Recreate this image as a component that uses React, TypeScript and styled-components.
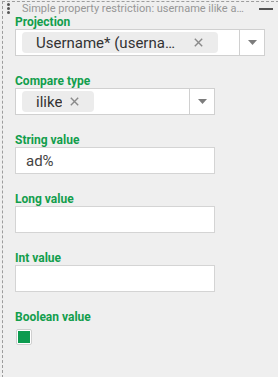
import React from 'react'
import styled, { createGlobalStyle } from 'styled-components'

const GREEN = '#129e4c'

const GlobalStyle = createGlobalStyle`
  html, body {
    margin: 0;
    padding: 0;
    background: #efefef;
  }
  body {
    font-family: Roboto, "Liberation Sans", sans-serif;
    overflow: hidden;
  }
`

// right and bottom borders sit just past the frame, as in the original
const Panel = styled.div`
  margin: 1px 0 0 2px;
  width: calc(100vw - 1px);
  height: 100vh;
  box-sizing: border-box;
  border: 1px dashed #9c9c9c;
  background: #efefef;
`

const Header = styled.div`
  display: flex;
  align-items: center;
  height: 13px;
  width: 271px;
  padding-left: 4px;
  box-sizing: border-box;
`

const Title = styled.div`
  flex: 1;
  min-width: 0;
  margin-left: 12px;
  font-size: 11px;
  line-height: 13px;
  color: #979797;
  white-space: nowrap;
  overflow: hidden;
  text-overflow: ellipsis;
`

const Minimize = styled.button`
  width: 14px;
  height: 2px;
  margin: 0 1px 0 11px;
  padding: 0;
  border: none;
  background: #555;
  cursor: pointer;
`

const Body = styled.div`
  padding: 0 12px;
`

const Field = styled.div`
  margin-bottom: 18px;
`

const Label = styled.label`
  display: block;
  font-size: 12px;
  line-height: 14px;
  font-weight: 700;
  color: ${GREEN};
`

const Select = styled.div<{ $width: number }>`
  display: flex;
  width: ${p => p.$width}px;
  height: 27px;
  box-sizing: border-box;
  border: 1px solid #d0d0d0;
  background: #fff;
`

const ChipArea = styled.div`
  flex: 1;
  min-width: 0;
  display: flex;
  align-items: center;
  padding: 0 6px;
`

const Chip = styled.span`
  display: inline-flex;
  align-items: center;
  height: 21px;
  padding: 0 15px 0 14px;
  border-radius: 4px;
  background: #ececec;
  font-size: 15px;
  color: #333;
`

const ChipText = styled.span<{ $max?: number }>`
  max-width: ${p => (p.$max ? `${p.$max}px` : 'none')};
  white-space: nowrap;
  overflow: hidden;
  text-overflow: ellipsis;
`

const Remove = styled.svg`
  margin-left: 8px;
  flex-shrink: 0;
`

const ArrowCell = styled.div`
  width: 25px;
  box-sizing: border-box;
  border-left: 1px solid #d0d0d0;
  display: flex;
  align-items: center;
  justify-content: center;
`

const Input = styled.input`
  display: block;
  width: 200px;
  height: 27px;
  box-sizing: border-box;
  border: 1px solid #d4d4d4;
  background: #fff;
  padding: 0 10px;
  font-family: inherit;
  font-size: 15px;
  color: #444;
  outline: none;
`

const Checkbox = styled.div`
  width: 16px;
  height: 16px;
  margin: 5px 0 0 1px;
  box-sizing: border-box;
  border: 1px solid #cfcfcf;
  border-radius: 2px;
  padding: 1px;
  background: #fff;
`

const CheckFill = styled.div`
  width: 100%;
  height: 100%;
  background: #0c9b4f;
`

function Handle() {
  return (
    <svg width="3" height="11" viewBox="0 0 3 11">
      <circle cx="1.5" cy="1.5" r="1.5" fill="#555" />
      <circle cx="1.5" cy="5.5" r="1.5" fill="#555" />
      <circle cx="1.5" cy="9.5" r="1.5" fill="#555" />
    </svg>
  )
}

function Cross() {
  return (
    <Remove width="9" height="9" viewBox="0 0 9 9">
      <path d="M0.8 0.8 L8.2 8.2 M8.2 0.8 L0.8 8.2" stroke="#8a8a8a" strokeWidth="1.4" />
    </Remove>
  )
}

function Arrow() {
  return (
    <svg width="9" height="5" viewBox="0 0 9 5">
      <path d="M0 0 H9 L4.5 5 Z" fill="#7c7c7c" />
    </svg>
  )
}

function TagSelect({ value, width, max }: { value: string; width: number; max?: number }) {
  return (
    <Select $width={width}>
      <ChipArea>
        <Chip>
          <ChipText $max={max}>{value}</ChipText>
          <Cross />
        </Chip>
      </ChipArea>
      <ArrowCell>
        <Arrow />
      </ArrowCell>
    </Select>
  )
}

export default function App() {
  return (
    <>
      <GlobalStyle />
      <Panel>
        <Header>
          <Handle />
          <Title>Simple property restriction: username ilike ad%</Title>
          <Minimize aria-label="minimize" />
        </Header>
        <Body>
          <Field>
            <Label>Projection</Label>
            <TagSelect value="Username* (username)" width={250} max={150} />
          </Field>
          <Field>
            <Label>Compare type</Label>
            <TagSelect value="ilike" width={200} />
          </Field>
          <Field>
            <Label>String value</Label>
            <Input defaultValue="ad%" />
          </Field>
          <Field>
            <Label>Long value</Label>
            <Input />
          </Field>
          <Field>
            <Label>Int value</Label>
            <Input />
          </Field>
          <Field>
            <Label>Boolean value</Label>
            <Checkbox>
              <CheckFill />
            </Checkbox>
          </Field>
        </Body>
      </Panel>
    </>
  )
}
